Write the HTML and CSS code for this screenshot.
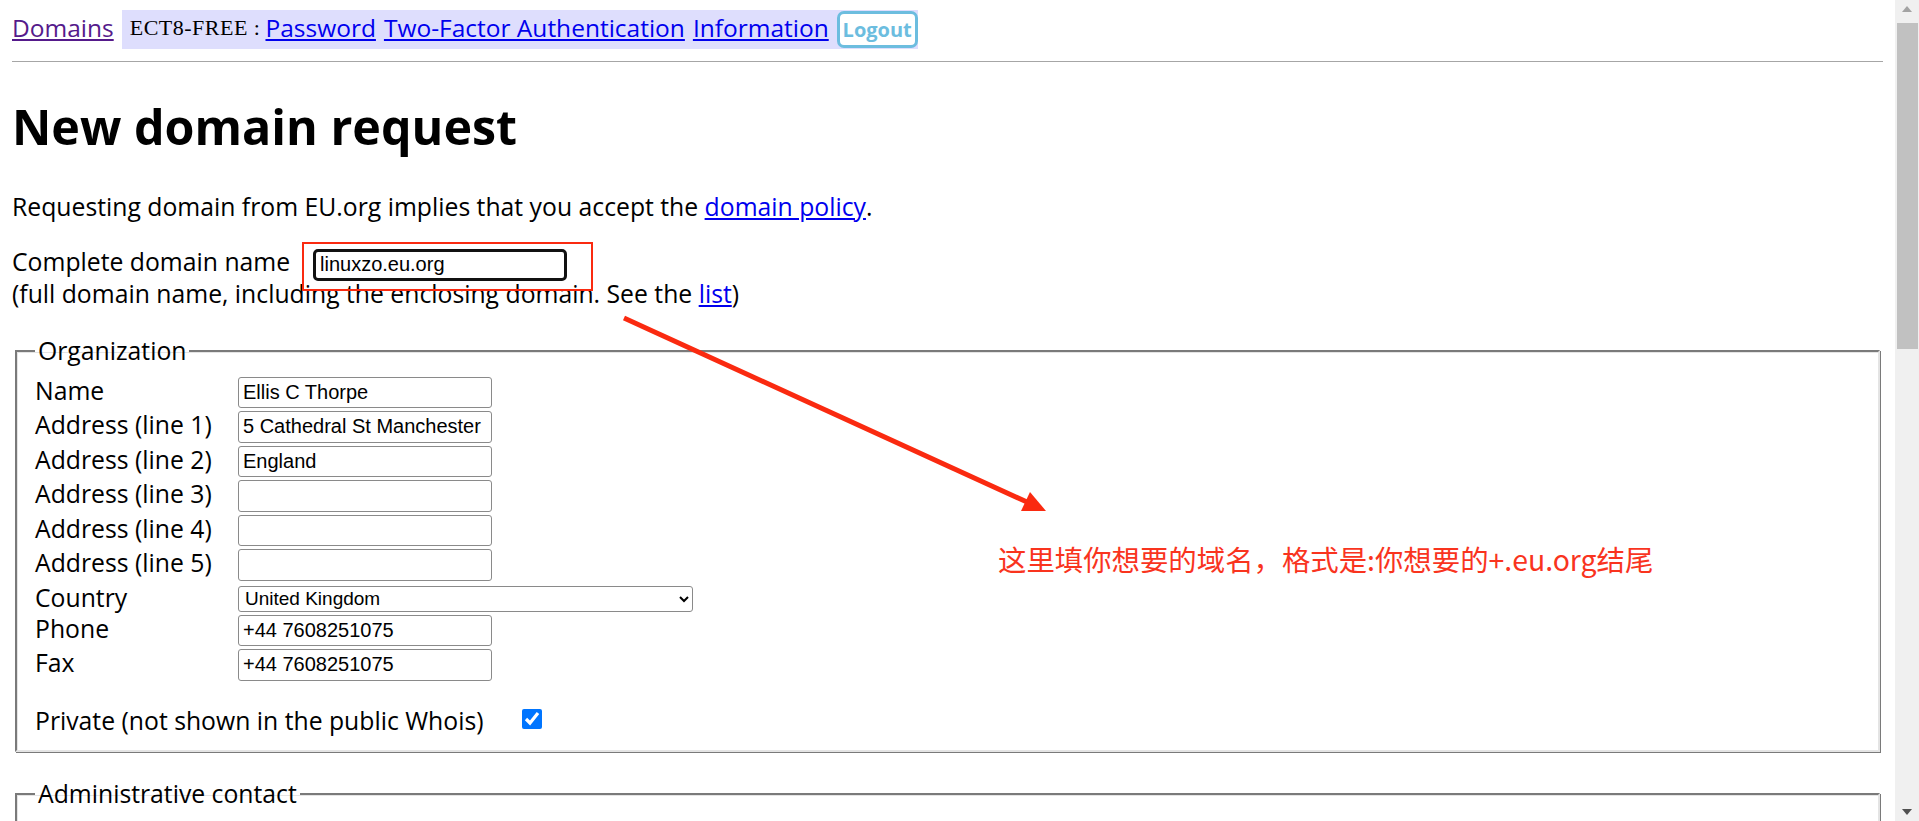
FILE: index.html
```html
<!DOCTYPE html>
<html lang="en">
<head>
<meta charset="utf-8">
<title>New domain request</title>
<link rel="stylesheet" href="styles.css">
</head>
<body>
<div class="page">
  <main class="main">
    <nav class="topnav">
      <a class="navlink visited" href="#">Domains</a>
      <div class="userbox">
        <span class="handle">ECT8-FREE :</span>
        <a class="navlink" href="#">Password</a>
        <a class="navlink" href="#">Two-Factor Authentication</a>
        <a class="navlink" href="#">Information</a>
        <button class="logout" type="button">Logout</button>
      </div>
    </nav>
    <hr class="rule">
    <h1 class="title">New domain request</h1>
    <p class="intro">Requesting domain from EU.org implies that you accept the <a href="#">domain policy</a>.</p>
    <div class="domain-block">
      <div class="domain-row">
        <label class="domain-label" for="fqdn">Complete domain name</label>
        <input class="field domain-input" id="fqdn" type="text" value="linuxzo.eu.org">
      </div>
      <div class="domain-hint">(full domain name, including the enclosing domain. See the <a href="#">list</a>)</div>
    </div>

    <fieldset class="group">
      <legend class="legend">Organization</legend>
      <div class="form-grid">
        <label class="lbl">Name</label><input class="field" type="text" value="Ellis C Thorpe">
        <label class="lbl">Address (line 1)</label><input class="field" type="text" value="5 Cathedral St Manchester">
        <label class="lbl">Address (line 2)</label><input class="field" type="text" value="England">
        <label class="lbl">Address (line 3)</label><input class="field" type="text" value="">
        <label class="lbl">Address (line 4)</label><input class="field" type="text" value="">
        <label class="lbl">Address (line 5)</label><input class="field" type="text" value="">
        <label class="lbl">Country</label>
        <select class="country">
          <option>United Kingdom</option>
          <option>France</option>
          <option>Germany</option>
        </select>
        <label class="lbl">Phone</label><input class="field" type="text" value="+44 7608251075">
        <label class="lbl">Fax</label><input class="field" type="text" value="+44 7608251075">
      </div>
      <div class="private-row">
        <label class="private-label" for="priv">Private (not shown in the public Whois)</label>
        <input class="check" id="priv" type="checkbox" checked>
      </div>
    </fieldset>

    <fieldset class="group group-next">
      <legend class="legend">Administrative contact</legend>
    </fieldset>
  </main>

  <div class="scrollbar" aria-hidden="true">
    <div class="sb-btn">
      <svg width="12" height="8" viewBox="0 0 12 8"><polygon points="6,1 11,7 1,7" fill="#a3a3a3"/></svg>
    </div>
    <div class="sb-thumb"></div>
    <div class="sb-track"></div>
    <div class="sb-btn">
      <svg width="12" height="8" viewBox="0 0 12 8"><polygon points="1,1 11,1 6,7" fill="#505050"/></svg>
    </div>
  </div>
</div>

<div class="annot-box"></div>
<svg class="annot-arrow" width="1919" height="821" viewBox="0 0 1919 821">
  <line x1="624" y1="318" x2="1027" y2="502" stroke="#fa2a10" stroke-width="5"/>
  <polygon points="1046,511 1021,511 1030,492" fill="#fa2a10"/>
</svg>
<div class="annot-text">这里填你想要的域名，格式是:你想要的+.eu.org结尾</div>
</body>
</html>
```

FILE: styles.css
```css
html, body {
  margin: 0;
  padding: 0;
  height: 821px;
  overflow: hidden;
  background: #ffffff;
}

body {
  font-family: "Open Sans", "Noto Sans CJK SC", sans-serif;
  font-size: 24.75px;
  line-height: 32px;
  color: #000;
  position: relative;
}

a {
  color: #0000ee;
  text-decoration: underline;
}

.page {
  display: flex;
  height: 821px;
}

.main {
  flex: 1;
  min-width: 0;
  padding: 10px 12px 0;
  overflow: hidden;
}

/* ---------- top navigation ---------- */
.topnav {
  display: flex;
  align-items: flex-start;
  gap: 8px;
  height: 38.5px;
}

.navlink {
  margin-top: 1.5px;
  white-space: nowrap;
  font-size: 24.5px;
}

.navlink.visited {
  color: #551a8b;
}

.userbox {
  display: flex;
  align-items: flex-start;
  gap: 8px;
  height: 38.5px;
  padding-left: 8px;
  background: #dedefd;
}

.handle {
  margin-top: 1.5px;
  margin-right: -3px;
  font-family: "Liberation Serif", "Noto Serif", serif;
  font-size: 22px;
  letter-spacing: 0.5px;
  white-space: pre;
}

.logout {
  margin-top: 1px;
  width: 81px;
  height: 37px;
  box-sizing: border-box;
  border: 3px solid #6cbddf;
  border-radius: 7px;
  background: #fff;
  color: #6cbddf;
  font-family: "Open Sans", sans-serif;
  font-weight: 700;
  font-size: 20px;
  line-height: 1;
  padding: 0;
}

.rule {
  border: 0;
  border-top: 1.5px solid #a6a6a6;
  margin: 12.5px 0 0;
  height: 0;
}

/* ---------- heading & intro ---------- */
.title {
  font-size: 48.4px;
  font-weight: 700;
  line-height: 64px;
  margin: 31.5px 0 33px;
}

.intro {
  margin: 0 0 23px;
}

.domain-block {
  margin: 0 0 25px;
}

.domain-row {
  display: flex;
  align-items: flex-start;
  height: 32px;
}

.domain-label {
  width: 301px;
  flex: none;
}

.domain-hint {
  white-space: nowrap;
}

/* ---------- inputs ---------- */
.field {
  box-sizing: border-box;
  width: 254px;
  height: 31.5px;
  margin: 0;
  padding: 1.5px 4px;
  border: 1px solid #8a8a8a;
  border-radius: 3px;
  font-family: "Liberation Sans", Arial, sans-serif;
  font-size: 20px;
  color: #000;
  background: #fff;
}

.domain-input {
  margin-top: 3px;
  height: 32px;
  border: 3px solid #111;
  border-radius: 5px;
  padding: 0 4px;
}

/* ---------- fieldsets ---------- */
.group {
  margin: 0 3px;
  padding: 10px 18px 13px;
  border-width: 2px;
  border-style: solid;
  border-color: #7a7a7a #e4e4e4 #e4e4e4 #7a7a7a;
  box-shadow: inset 1px 1px 0 #e4e4e4, 1px 1px 0 #7a7a7a;
  min-width: 0;
}

.group-next {
  margin-top: 26.5px;
  min-height: 200px;
}

.legend {
  padding: 0 3px;
  line-height: 32px;
}

.form-grid {
  display: grid;
  grid-template-columns: 203px max-content;
  row-gap: 3px;
  align-items: start;
}

.lbl {
  line-height: 24px;
  padding-top: 2px;
  white-space: nowrap;
}

.country {
  box-sizing: border-box;
  width: 455px;
  height: 25.5px;
  margin: 2.5px 0 0;
  padding: 0 2px;
  border: 1px solid #8a8a8a;
  border-radius: 3px;
  background: #fff;
  font-family: "Liberation Sans", Arial, sans-serif;
  font-size: 19px;
  color: #000;
}

.private-row {
  display: flex;
  align-items: center;
  margin-top: 24px;
  height: 32px;
}

.private-label {
  width: 487px;
  flex: none;
  white-space: nowrap;
}

.check {
  width: 19.5px;
  height: 19.5px;
  margin: -3px 0 0 0;
  accent-color: #0075ff;
}

/* ---------- fake scrollbar ---------- */
.scrollbar {
  flex: none;
  width: 24px;
  height: 821px;
  background: #f0f0f0;
  display: flex;
  flex-direction: column;
  align-items: center;
}

.sb-btn {
  height: 18px;
  width: 24px;
  display: flex;
  align-items: center;
  justify-content: center;
}

.sb-thumb {
  margin-top: 5px;
  width: 21px;
  height: 326px;
  background: #c1c1c1;
}

.sb-track {
  flex: 1;
}

/* ---------- annotation overlay ---------- */
.annot-box {
  position: absolute;
  left: 302px;
  top: 242px;
  width: 291px;
  height: 49px;
  box-sizing: border-box;
  border: 2.5px solid #fa2a10;
}

.annot-arrow {
  position: absolute;
  left: 0;
  top: 0;
  pointer-events: none;
}

.annot-text {
  position: absolute;
  left: 998px;
  top: 544px;
  font-family: "Noto Sans CJK SC", sans-serif;
  font-size: 28.4px;
  line-height: 30px;
  color: #f9341e;
  white-space: nowrap;
}
```
